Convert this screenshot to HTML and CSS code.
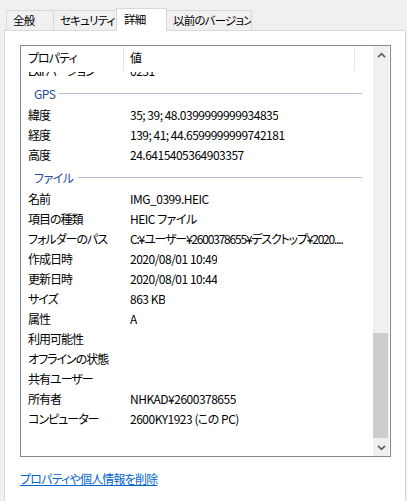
FILE: index.html
```html
<!DOCTYPE html>
<html lang="ja">
<head>
    <meta charset="UTF-8">
    <meta name="viewport" content="width=device-width, initial-scale=1.0">
    <title>詳細</title>
    <link rel="stylesheet" href="styles.css">
</head>
<body>
    <div class="tabs">
        <div class="tab tab-general">全般</div>
        <div class="tab tab-security">セキュリティ</div>
        <div class="tab tab-details active">詳細</div>
        <div class="tab tab-versions">以前のバージョン</div>
    </div>
    <div class="panel">
        <div class="listbox">
            <div class="list-main">
                <div class="list-header">
                    <div class="head-cell col-name">プロパティ</div>
                    <div class="head-cell col-value">値</div>
                    <div class="head-cell col-fill"></div>
                </div>
                <div class="list-body">
                    <div class="list-content">
                        <div class="row"><span class="name">Exif バージョン</span><span class="value">0231</span></div>
                        <div class="group"><span>GPS</span><i class="group-line"></i></div>
                        <div class="row"><span class="name">緯度</span><span class="value">35; 39; 48.0399999999934835</span></div>
                        <div class="row"><span class="name">経度</span><span class="value">139; 41; 44.6599999999742181</span></div>
                        <div class="row"><span class="name">高度</span><span class="value">24.6415405364903357</span></div>
                        <div class="group"><span>ファイル</span><i class="group-line"></i></div>
                        <div class="row"><span class="name">名前</span><span class="value">IMG_0399.HEIC</span></div>
                        <div class="row"><span class="name">項目の種類</span><span class="value">HEIC ファイル</span></div>
                        <div class="row"><span class="name">フォルダーのパス</span><span class="value value-path">C:¥ユーザー¥2600378655¥デスクトップ¥2020....</span></div>
                        <div class="row"><span class="name">作成日時</span><span class="value">2020/08/01 10:49</span></div>
                        <div class="row"><span class="name">更新日時</span><span class="value">2020/08/01 10:44</span></div>
                        <div class="row"><span class="name">サイズ</span><span class="value">863 KB</span></div>
                        <div class="row"><span class="name">属性</span><span class="value">A</span></div>
                        <div class="row"><span class="name">利用可能性</span><span class="value"></span></div>
                        <div class="row"><span class="name">オフラインの状態</span><span class="value"></span></div>
                        <div class="row"><span class="name">共有ユーザー</span><span class="value"></span></div>
                        <div class="row"><span class="name">所有者</span><span class="value">NHKAD¥2600378655</span></div>
                        <div class="row"><span class="name">コンピューター</span><span class="value">2600KY1923 (この PC)</span></div>
                    </div>
                </div>
            </div>
            <div class="scrollbar">
                <div class="scroll-btn">
                    <svg width="9" height="6" viewBox="0 0 9 6"><path d="M1 5.2 L4.5 1.6 L8 5.2" fill="none" stroke="#606060" stroke-width="1.7"/></svg>
                </div>
                <div class="scroll-track">
                    <div class="scroll-thumb"></div>
                </div>
                <div class="scroll-btn">
                    <svg width="9" height="6" viewBox="0 0 9 6"><path d="M1 0.8 L4.5 4.4 L8 0.8" fill="none" stroke="#606060" stroke-width="1.7"/></svg>
                </div>
            </div>
        </div>
        <a class="remove-link" href="#">プロパティや個人情報を削除</a>
    </div>
</body>
</html>
```

FILE: styles.css
```css
body {
    margin: 0;
    background-color: #f0f0f0;
    font-family: "Noto Sans CJK JP", sans-serif;
    font-size: 12px;
    font-feature-settings: "palt";
    letter-spacing: -0.5px;
    color: #000;
    height: 501px;
    overflow: hidden;
}
.tabs {
    display: flex;
    align-items: flex-end;
    padding: 8px 0 0 6px;
    height: 22px;
}
.tab {
    box-sizing: border-box;
    height: 20px;
    line-height: 19px;
    padding-left: 6px;
    border: 1px solid #d9d9d9;
    border-bottom: none;
    margin-left: -1px;
    background-color: #f0f0f0;
    font-size: 11.5px;
    letter-spacing: -0.8px;
    white-space: nowrap;
    overflow: hidden;
}
.tab:first-child {
    margin-left: 0;
}
.tab-general {
    width: 48px;
}
.tab-security {
    width: 64px;
}
.tab-details {
    width: 51px;
}
.tab-versions {
    width: 86px;
}
.tab.active {
    position: relative;
    z-index: 1;
    height: 23px;
    line-height: 20px;
    margin-bottom: -1px;
    padding-left: 7px;
    background-color: #fff;
}
.panel {
    margin: 0 1px 0 4px;
    height: 480px;
    padding: 14px 15px 0 15px;
    border: 1px solid #d9d9d9;
    border-bottom: none;
    background-color: #fff;
}
.listbox {
    display: flex;
    width: 369px;
    height: 410px;
    border: 1px solid #828790;
}
.list-main {
    display: flex;
    flex-direction: column;
    width: 352px;
}
.list-header {
    display: flex;
    height: 26px;
    flex-shrink: 0;
    background-color: #fff;
}
.head-cell {
    height: 24px;
    margin-top: 1px;
    line-height: 22px;
    border-right: 1px solid #e5e5e5;
    letter-spacing: -1px;
    white-space: nowrap;
}
.col-name {
    width: 95px;
    padding-left: 7px;
}
.col-value {
    width: 224px;
    padding-left: 6px;
}
.col-fill {
    flex: 1;
    border-right: none;
}
.list-body {
    flex: 1;
    overflow: hidden;
}
.list-content {
    margin-top: -11px;
}
.row {
    display: flex;
    height: 20px;
    line-height: 20px;
    white-space: nowrap;
}
.name {
    width: 95px;
    padding-left: 7px;
    flex-shrink: 0;
    letter-spacing: -1px;
}
.value {
    max-width: 224px;
    padding-left: 7px;
    overflow: hidden;
    text-overflow: ellipsis;
}
.value-path {
    letter-spacing: -1.2px;
}
.group {
    display: flex;
    align-items: center;
    height: 24px;
    padding: 0 11px 0 13px;
    color: #2a4a9c;
}
.group-line {
    flex: 1;
    height: 1px;
    margin-left: 4px;
    margin-top: 1px;
    background-color: #b6c0dc;
}
.scrollbar {
    display: flex;
    flex-direction: column;
    width: 16px;
    background-color: #f0f0f0;
}
.scroll-btn {
    display: flex;
    align-items: center;
    justify-content: center;
    height: 17px;
}
.scroll-track {
    flex: 1;
    display: flex;
    flex-direction: column;
    justify-content: flex-end;
    padding-bottom: 1px;
}
.scroll-thumb {
    height: 105px;
    margin-right: 1px;
    background-color: #cdcdcd;
}
.remove-link {
    display: inline-block;
    margin-top: 13px;
    line-height: 17px;
    color: #0066cc;
    letter-spacing: -0.8px;
    text-decoration: underline;
}
```
